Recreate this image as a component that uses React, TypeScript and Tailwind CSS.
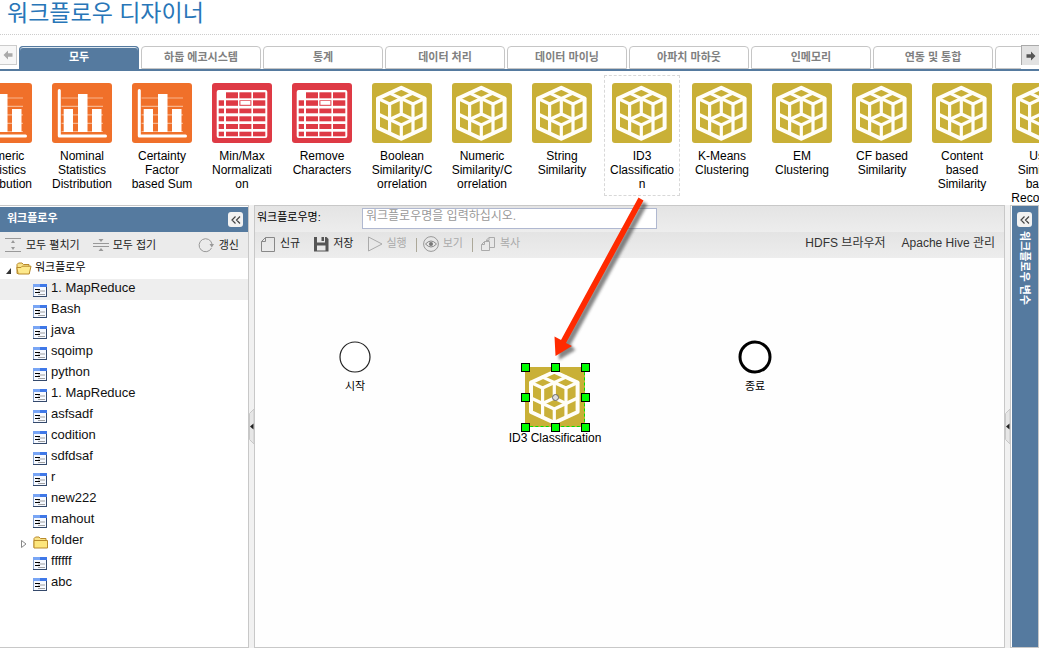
import React from "react";

const FONT = "font-['Liberation_Sans','Noto_Sans_CJK_KR',sans-serif]";

const tabs = ["모두", "하둡 에코시스템", "통계", "데이터 처리", "데이터 마이닝", "아파치 마하웃", "인메모리", "연동 및 통합", ""];

type Kind = "chart" | "table" | "cube";

const palette: { kind: Kind; lines: string[]; picked?: boolean }[] = [
  { kind: "chart", lines: ["Numeric", "Statistics", "Distribution"] },
  { kind: "chart", lines: ["Nominal", "Statistics", "Distribution"] },
  { kind: "chart", lines: ["Certainty", "Factor", "based Sum"] },
  { kind: "table", lines: ["Min/Max", "Normalizati", "on"] },
  { kind: "table", lines: ["Remove", "Characters"] },
  { kind: "cube", lines: ["Boolean", "Similarity/C", "orrelation"] },
  { kind: "cube", lines: ["Numeric", "Similarity/C", "orrelation"] },
  { kind: "cube", lines: ["String", "Similarity"] },
  { kind: "cube", lines: ["ID3", "Classificatio", "n"], picked: true },
  { kind: "cube", lines: ["K-Means", "Clustering"] },
  { kind: "cube", lines: ["EM", "Clustering"] },
  { kind: "cube", lines: ["CF based", "Similarity"] },
  { kind: "cube", lines: ["Content", "based", "Similarity"] },
  { kind: "cube", lines: ["User", "Similarity", "based", "Recommen"] },
];

const files = [
  "1. MapReduce", "Bash", "java", "sqoimp", "python", "1. MapReduce", "asfsadf", "codition",
  "sdfdsaf", "r", "new222", "mahout", "folder", "ffffff", "abc",
];

function CubeIcon({ square = false }: { square?: boolean }) {
  return (
    <svg viewBox="0 0 60 60" className="block size-[60px] shrink-0" aria-hidden="true">
      <rect width="60" height="60" rx={square ? 0 : 3} fill="#c9b037" />
      <g fill="none" stroke="#fffef8" strokeWidth="3.2" strokeLinejoin="round" strokeLinecap="round">
        <path strokeWidth="4" d="M29.300 4.700L52.600 15.500V45L29.300 55.800L6 45V15.500Z" />
        <path d="M17.600 10.100L41 21V36.500L29.300 42L17.600 36.500V21L41 10.100" />
        <path d="M6 15.500L17.600 21M52.600 15.500L41 21M29.300 15.500V31M29.300 31L17.600 36.500M29.300 31L41 36.500" />
        <path d="M6 31L17.600 36.500V50.500M52.600 31L41 36.500V50.500M29.300 42V55.500" />
      </g>
    </svg>
  );
}

function ChartIcon() {
  return (
    <svg viewBox="0 0 60 60" className="block size-[60px] shrink-0" aria-hidden="true">
      <rect width="60" height="60" rx="3" fill="#f0702a" />
      <path d="M9.5 15H51M9.5 23.3H51M9.5 31.8H51M9.5 40.3H51M9.5 48.5H51" stroke="#f8b48c" strokeWidth="1.2" />
      <path d="M11.7 26H21V49H11.7ZM26 11H35.5V49H26ZM40 26H49.5V49H40Z" fill="#fff" />
      <path d="M7.3 7.5V53H53.5" fill="none" stroke="#fff" strokeWidth="3" strokeLinecap="round" strokeLinejoin="round" />
    </svg>
  );
}

const cols = [[6.7, 5.3], [14, 12], [27.4, 12], [41, 12.3]];
const rows = [[9.3, 6], [17.3, 5.5], [25.5, 4.8], [33.3, 5], [41, 5], [48.7, 4.6]];

function TableIcon() {
  return (
    <svg viewBox="0 0 60 60" className="block size-[60px] shrink-0" aria-hidden="true">
      <rect width="60" height="60" rx="3" fill="#de3a45" />
      <rect x="4.7" y="7" width="50.6" height="47.9" rx="2" fill="#fff" />
      {rows.map(([y, h], r) =>
        cols.map(([x, w], c) =>
          r + c === 0 ? null : <rect key={`${r}-${c}`} x={x} y={y} width={w} height={h} fill="#de3a45" />
        )
      )}
      <rect x="28.4" y="18" width="10" height="3.8" fill="#fff" />
    </svg>
  );
}

function NodeIcon({ kind }: { kind: Kind }) {
  if (kind === "chart") return <ChartIcon />;
  if (kind === "table") return <TableIcon />;
  return <CubeIcon />;
}

function ArrowGlyph({ flip = false, color }: { flip?: boolean; color: string }) {
  return (
    <svg viewBox="0 0 10 10" className={flip ? "size-[10px] -scale-x-100" : "size-[10px]"} aria-hidden="true">
      <path d="M5 0.5L9.5 5L5 9.5V6.7H0.5V3.3H5Z" fill={color} />
    </svg>
  );
}

function CollapseButton({ label }: { label: string }) {
  return (
    <button aria-label={label} className="flex size-[15px] shrink-0 items-center justify-center rounded-[3px] bg-[#f2f2f2]">
      <svg viewBox="0 0 10 8" className="h-2 w-[10px]" fill="none" stroke="#444" strokeWidth="1.2" aria-hidden="true">
        <path d="M4.5 0.5L1 4L4.5 7.5M9 0.5L5.5 4L9 7.5" />
      </svg>
    </button>
  );
}

function FileIcon() {
  return (
    <svg viewBox="0 0 14 13" className="h-[13px] w-[14px]" aria-hidden="true">
      <rect x="0.5" y="0.5" width="13" height="12" fill="#f6f9ff" stroke="#8aa4cc" />
      <path d="M0 0H14V3H0Z" fill="#3f78e8" />
      <path d="M0 0H7V3H0Z" fill="#78a5f5" />
      <path d="M0 12.500H14M13.500 3V13" stroke="#34496b" />
      <path d="M2 5.500H7M2 8.500H7" stroke="#000" />
      <path d="M5 7H12M5 10.500H12" stroke="#8a8a8a" strokeWidth="0.8" />
    </svg>
  );
}

function FolderIcon({ open = false }: { open?: boolean }) {
  return (
    <svg viewBox="0 0 16 13" className="h-[13px] w-4" aria-hidden="true">
      <path d="M1 11.5V2.5L2.5 1H6L7.5 2.5H13V11.5Z" fill="#f9e38a" stroke="#b98a2a" />
      {open ? (
        <path d="M2.2 12L0.8 5.5H5L6.2 4.2H15L13.2 12Z" fill="#fde98c" stroke="#b98a2a" />
      ) : (
        <path d="M1 12V4.5H14.5V12Z" fill="#fde67c" stroke="#b98a2a" />
      )}
    </svg>
  );
}

function Splitter({ label }: { label: string }) {
  return (
    <div className="flex w-[5px] shrink-0 items-center bg-[#f1f1f1]">
      <button aria-label={label} className="block">
        <svg viewBox="0 0 5 35" className="h-[35px] w-[5px]" aria-hidden="true">
          <path d="M5 0L0.5 4.5V30.5L5 35Z" fill="#e6e6e6" stroke="#c8c8c8" />
          <path d="M4.5 14.5L1 17.5L4.5 20.5Z" fill="#222" />
        </svg>
      </button>
    </div>
  );
}

function Tool({ label, off = false, children }: { label: string; off?: boolean; children: React.ReactNode }) {
  return (
    <button disabled={off} className={`flex items-center gap-1 text-[11px] ${off ? "text-[#aaa]" : "text-[#222]"}`}>
      <svg viewBox="0 0 16 16" className="mt-0.5 size-4" fill="none" stroke={off ? "#aaa" : "#666"} strokeWidth="1" aria-hidden="true">
        {children}
      </svg>
      <span>{label}</span>
    </button>
  );
}

const handles = [
  "left-[-4px] top-[-4px]", "left-[26px] top-[-4px]", "left-[56px] top-[-4px]",
  "left-[-4px] top-[26px]", "left-[56px] top-[26px]",
  "left-[-4px] top-[56px]", "left-[26px] top-[56px]", "left-[56px] top-[56px]",
];

function Canvas() {
  return (
    <div className="relative min-h-0 flex-1 bg-[#fefefe] text-[12px] leading-[14px] text-black">
      <div className="absolute left-[80px] top-[82px] flex w-10 flex-col items-center gap-[5px]">
        <svg viewBox="0 0 34 34" className="size-[34px]" aria-hidden="true">
          <circle cx="17" cy="17" r="15" fill="#fff" stroke="#222" strokeWidth="1.2" />
        </svg>
        <span className="text-[11px]">시작</span>
      </div>

      <div className="absolute left-[270px] top-[109px] size-[60px]">
        <CubeIcon square />
        <div className="absolute inset-0 border-b border-r border-dashed border-[#00e000]" />
        <div className="absolute left-[27px] top-[27px] size-[7px] rounded-full border border-[#666] bg-[#ddd]" />
        {handles.map((place) => (
          <div key={place} className={`absolute size-[9px] border border-black bg-[#00ff00] ${place}`} />
        ))}
        <span className="absolute left-1/2 top-16 -translate-x-1/2 whitespace-nowrap">ID3 Classification</span>
      </div>

      <div className="absolute left-[480px] top-[82px] flex w-10 flex-col items-center gap-[5px]">
        <svg viewBox="0 0 34 34" className="size-[34px]" aria-hidden="true">
          <circle cx="17" cy="17" r="15" fill="#fff" stroke="#000" strokeWidth="3" />
        </svg>
        <span className="text-[11px]">종료</span>
      </div>

      <svg viewBox="0 0 110 175" className="pointer-events-none absolute left-[293px] top-[-63px] z-10 h-[175px] w-[110px]" aria-hidden="true">
        <defs>
          <filter id="soft" x="-20%" y="-20%" width="140%" height="140%">
            <feGaussianBlur stdDeviation="1.8" />
          </filter>
        </defs>
        <path transform="translate(4 4)" filter="url(#soft)" opacity="0.65" fill="#444" d="M90.500 2.500L95.500 5.500L18.500 146L23.500 151L7 161L6.500 142L12.500 143.500Z" />
        <path fill="#ff2a00" d="M90.500 2.500L95.500 5.500L18 148L24 151L7.500 161L6.500 141.500L13 145Z" />
      </svg>
    </div>
  );
}

export default function App() {
  return (
    <div className={`flex h-screen min-h-[600px] flex-col overflow-hidden bg-white ${FONT}`}>
      <header className="h-[35px] shrink-0 border-b border-dotted border-[#ccc] pl-[7px]">
        <h1 className="text-[23px] leading-[26px] text-[#2876b8]">워크플로우 디자이너</h1>
      </header>

      <nav className="mt-[10px] flex h-[26px] shrink-0 items-start border-b-2 border-[#557a9f]">
        <button aria-label="이전 탭" className="flex h-5 w-[17px] shrink-0 items-center justify-center border-y border-r border-[#ccc] bg-[#f7f7f7]">
          <ArrowGlyph flip color="#aaa" />
        </button>
        <div className="ml-0.5 mt-px flex h-[23px] min-w-0 flex-1 gap-0.5 overflow-hidden text-[11px] font-bold leading-4">
          {tabs.map((t, i) => (
            <button
              key={i}
              className={
                i === 0
                  ? "w-[120px] shrink-0 rounded-t border border-b-0 border-[#557a9f] bg-[#557a9f] pb-0.5 text-white inset-shadow-[0_1px_0_#dfe8f0]"
                  : "w-[120px] shrink-0 rounded-t border border-[#c6c6c6] bg-white pb-0.5 text-[#808080]"
              }
            >
              {t}
            </button>
          ))}
        </div>
        <button aria-label="다음 탭" className="flex h-5 w-[18px] shrink-0 items-center justify-center border-l border-t border-[#aaa] bg-[#e2e2e2]">
          <ArrowGlyph color="#555" />
        </button>
      </nav>

      <section className="h-[134px] shrink-0 overflow-hidden pt-1">
        <div className="-ml-9 flex gap-1">
          {palette.map((p, i) => (
            <div
              key={i}
              className={`flex h-[121px] w-[76px] shrink-0 flex-col items-center gap-1.5 border border-dashed pt-[7px] ${p.picked ? "border-[#d8d8d8]" : "border-transparent"}`}
            >
              <NodeIcon kind={p.kind} />
              <div className="text-center text-[12px] leading-[14px] text-black">
                {p.lines.map((l) => (
                  <div key={l}>{l}</div>
                ))}
              </div>
            </div>
          ))}
        </div>
      </section>

      <main className="flex min-h-0 flex-1">
        <aside className="flex w-[249px] shrink-0 flex-col border-b border-r border-t border-[#c8c8c8] pt-px">
          <div className="flex h-[25px] shrink-0 items-center justify-between bg-[#557a9f] pl-[7px] pr-[5px]">
            <h2 className="pb-1 text-[11px] font-bold leading-4 text-white">워크플로우</h2>
            <CollapseButton label="왼쪽 패널 접기" />
          </div>
          <div className="flex h-[26px] shrink-0 items-center bg-[#ebebeb] pl-[5px] pr-[9px] text-[11px] leading-4 text-[#222]">
            <button className="flex items-center gap-[5px]">
              <svg viewBox="0 0 16 16" className="size-4" aria-hidden="true">
                <path d="M0 1.500H16M0 14.500H16" stroke="#999" />
                <path d="M8 3L10 6H6ZM8 13L10 10H6Z" fill="#999" />
              </svg>
              모두 펼치기
            </button>
            <button className="ml-[13px] flex items-center gap-1">
              <svg viewBox="0 0 16 16" className="size-4" aria-hidden="true">
                <path d="M0 6.500H16M0 9.500H16" stroke="#999" />
                <path d="M8 5L10.500 2H5.500ZM8 11L10.500 14H5.500Z" fill="#999" />
              </svg>
              모두 접기
            </button>
            <button className="ml-auto flex items-center gap-[5px]">
              <svg viewBox="0 0 16 16" className="size-4" aria-hidden="true">
                <path d="M13.500 11A6.500 6.500 0 1 1 14 7" fill="none" stroke="#999" />
                <path d="M11.500 7H16L13.800 10.500Z" fill="#999" />
              </svg>
              갱신
            </button>
          </div>
          <div className="min-h-0 flex-1 overflow-hidden bg-white">
            <div className="flex h-[21px] items-center pl-[5px] text-[11px] leading-4 text-black">
              <svg viewBox="0 0 8 8" className="mt-1 size-2" aria-hidden="true">
                <path d="M6 1V7H1Z" fill="#333" />
              </svg>
              <span className="ml-[3px]"><FolderIcon open /></span>
              <span className="-mt-1 ml-[3px]">워크플로우</span>
            </div>
            <ul>
              {files.map((f, i) => (
                <li key={i} className={`flex h-[21px] items-center text-[13px] leading-4 text-[#111] ${i === 0 ? "bg-[#eee]" : ""}`}>
                  <span className="flex w-[33px] justify-end pr-1.5">
                    {f === "folder" && (
                      <svg viewBox="0 0 6 8" className="mt-1 h-2 w-1.5" aria-hidden="true">
                        <path d="M0.500 0.500L5 4L0.500 7.500Z" fill="#fff" stroke="#888" />
                      </svg>
                    )}
                  </span>
                  <span className="mt-0.5 w-[18px]">{f === "folder" ? <FolderIcon /> : <FileIcon />}</span>
                  <span className="-mt-1">{f}</span>
                </li>
              ))}
            </ul>
          </div>
        </aside>

        <Splitter label="왼쪽 패널 크기 조절" />

        <section className="flex min-w-0 flex-1 flex-col border border-[#c8c8c8]">
          <div className="flex h-[26px] shrink-0 items-center bg-gradient-to-b from-[#e4e4e4] to-[#ededed] pl-0.5">
            <label htmlFor="workflow-name" className="-mt-1 w-[105px] text-[11px] leading-4 text-black">워크플로우명:</label>
            <input
              id="workflow-name"
              placeholder="워크플로우명을 입력하십시오."
              className="-mt-0.5 h-[21px] w-[295px] border border-[#b0b8d0] bg-white px-[3px] pb-1 text-[12px] leading-4 placeholder:text-[#999] focus:outline-none"
            />
          </div>
          <div className="flex h-[26px] shrink-0 items-center bg-gradient-to-b from-[#e4e4e4] to-[#ededed] pb-1 pl-[5px] pr-[9px] leading-4">
            <Tool label="신규">
              <path d="M5.500 1.500H14.500V15.500H1.500V5.500ZM5.500 1.500V5.500H1.500" stroke="#888" />
            </Tool>
            <span className="w-[13px]" />
            <Tool label="저장">
              <path d="M1 1H4V6.500H12V1H13.500L15.500 3V15.500H1Z" fill="#555" stroke="none" />
              <path d="M8.500 1H11V5H8.500Z" fill="#555" stroke="none" />
              <path d="M4 9.500H12.500V14.500H4Z" fill="#e8e8e8" stroke="none" />
            </Tool>
            <span className="w-[13px]" />
            <Tool label="실행" off>
              <path d="M1.500 1L15 8L1.500 15Z" />
            </Tool>
            <span className="ml-[9px] mr-1.5 mt-1 h-[14px] w-px bg-[#aca899]" />
            <Tool label="보기" off>
              <circle cx="8" cy="8" r="7.400" stroke="#999" />
              <path d="M2.500 8Q8 2 13.500 8Q8 14 2.500 8Z" stroke="#888" />
              <circle cx="8" cy="8" r="2" fill="#777" stroke="none" />
            </Tool>
            <span className="ml-[9px] mr-[7px] mt-1 h-[14px] w-px bg-[#aca899]" />
            <Tool label="복사" off>
              <path d="M9 1.500H14.500V11.500H9.500M9 1.500L6.500 4V5M9 1.500V4.500H6.500M4.500 5.500H9.500V14.500H1.500V8.500ZM4.500 5.500V8.500H1.500" />
            </Tool>
            <div className="ml-auto flex gap-4 text-[12px] text-[#333]">
              <button>HDFS 브라우저</button>
              <button>Apache Hive 관리</button>
            </div>
          </div>
          <Canvas />
        </section>

        <Splitter label="오른쪽 패널 크기 조절" />

        <aside className="flex w-[29px] shrink-0 flex-col items-center gap-1 border border-[#c8c8c8] bg-[#557a9f] pt-[6px] inset-shadow-[1px_0_0_#ffffff]">
          <CollapseButton label="오른쪽 패널 펼치기" />
          <h2 className="text-[11px] font-bold leading-4 text-white [text-orientation:sideways] [writing-mode:vertical-rl]">워크플로우 변수</h2>
        </aside>
      </main>
    </div>
  );
}
